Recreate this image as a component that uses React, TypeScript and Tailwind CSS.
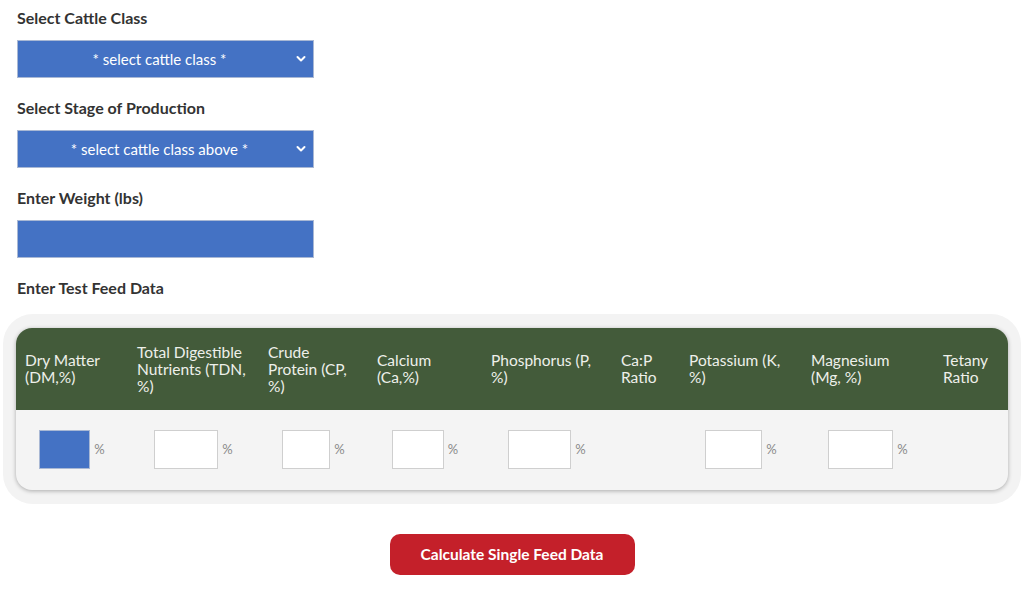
import React from "react";

const font = { fontFamily: "Lato, 'Open Sans', sans-serif" };

function Chevron() {
    return (
        <svg width="10" height="7" viewBox="0 0 10 7" className="absolute right-[7px] top-1/2 -translate-y-1/2">
            <path d="M1.5 1.5 L5 5 L8.5 1.5" fill="none" stroke="#fff" strokeWidth="2" strokeLinecap="round" strokeLinejoin="round" />
        </svg>
    );
}

function BlueSelect({ text }: { text: string }) {
    return (
        <div className="relative w-[297px] h-[38px] bg-[#4472c4] border border-[#a9b8d4] flex items-center justify-center pr-[12px] text-white text-[15px]">
            {text}
            <Chevron />
        </div>
    );
}

const columns = [
    { w: 112, head: ["Dry Matter", "(DM,%)"], input: 51, blue: true },
    { w: 131, head: ["Total Digestible", "Nutrients (TDN,", "%)"], input: 64 },
    { w: 109, head: ["Crude", "Protein (CP,", "%)"], input: 48 },
    { w: 114, head: ["Calcium", "(Ca,%)"], input: 52 },
    { w: 130, head: ["Phosphorus (P,", "%)"], input: 63 },
    { w: 68, head: ["Ca:P", "Ratio"] },
    { w: 122, head: ["Potassium (K,", "%)"], input: 57 },
    { w: 132, head: ["Magnesium", "(Mg, %)"], input: 65 },
    { w: 74, head: ["Tetany", "Ratio"] },
];

function App() {
    return (
        <div className="w-[1024px] h-[591px] bg-white px-[3px] text-[#333]" style={font}>
            <div className="pl-[14px]">
                {/* Cattle class */}
                <h3 className="pt-[9px] text-[16px] font-bold leading-[18px]">Select Cattle Class</h3>
                <div className="mt-[13px]">
                    <BlueSelect text="* select cattle class *" />
                </div>

                {/* Stage */}
                <h3 className="mt-[21px] text-[16px] font-bold leading-[18px]">Select Stage of Production</h3>
                <div className="mt-[13px]">
                    <BlueSelect text="* select cattle class above *" />
                </div>

                {/* Weight */}
                <h3 className="mt-[21px] text-[16px] font-bold leading-[18px]">Enter Weight (lbs)</h3>
                <div className="mt-[13px] w-[297px] h-[38px] bg-[#4472c4] border border-[#a9b8d4]"></div>

                <h3 className="mt-[21px] text-[16px] font-bold leading-[18px]">Enter Test Feed Data</h3>
            </div>

            {/* Feed table */}
            <div className="mt-[17px] w-[1018px] rounded-[30px] bg-[#f3f3f3] px-[13px] py-[14px]">
                <div className="w-[992px] rounded-[16px] overflow-hidden bg-[#f4f4f4] shadow-[0_1px_4px_rgba(0,0,0,0.3)]">
                    <div className="flex h-[82px] bg-[#435b3a] items-center">
                        {columns.map((c, i) => (
                            <div key={i} className="px-[9px] text-[15.5px] leading-[17px] text-[#eef0ea] whitespace-nowrap" style={{ width: c.w }}>
                                {c.head.map((l, j) => (
                                    <div key={j}>{l}</div>
                                ))}
                            </div>
                        ))}
                    </div>
                    <div className="flex h-[80px] items-start pt-[20px]">
                        {columns.map((c, i) => (
                            <div key={i} className="flex items-center justify-center gap-[4px]" style={{ width: c.w }}>
                                {c.input ? (
                                    <>
                                        <div
                                            className={
                                                c.blue
                                                    ? "h-[39px] bg-[#4472c4] border border-[#a9b8d4]"
                                                    : "h-[39px] bg-white border border-[#cfcfcf]"
                                            }
                                            style={{ width: c.input }}
                                        ></div>
                                        <span className="text-[13px] text-[#8a8a8a]">%</span>
                                    </>
                                ) : null}
                            </div>
                        ))}
                    </div>
                </div>
            </div>

            {/* Action */}
            <div className="flex justify-center mt-[30px]">
                <button className="w-[245px] h-[41px] rounded-[10px] bg-[#c4202a] text-white text-[15.5px] font-bold">
                    Calculate Single Feed Data
                </button>
            </div>
        </div>
    );
}

export default App;
